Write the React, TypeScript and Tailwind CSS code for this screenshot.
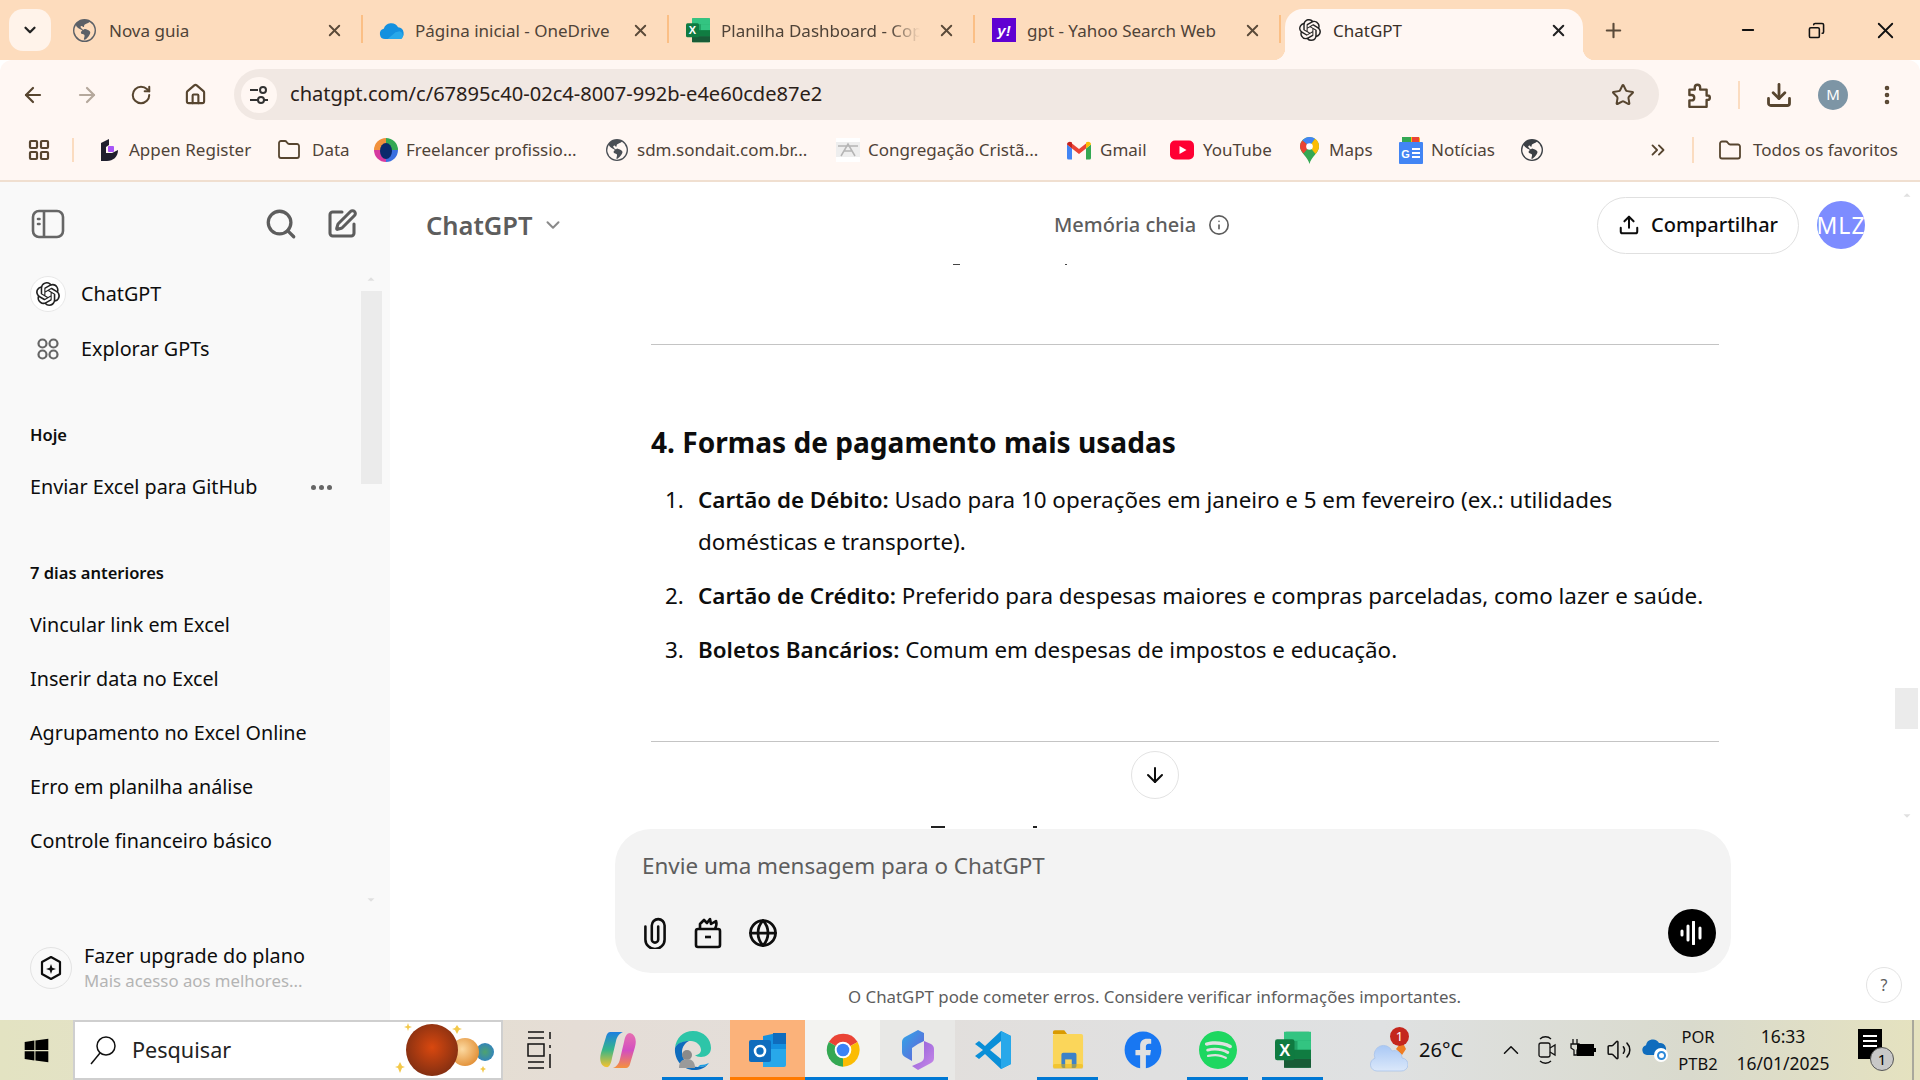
import React from "react";
import {
  ArrowLeft, ArrowRight, RotateCw, Home, Star, Download, MoreVertical, X, Plus, Minus, Search,
  SquarePen, Globe, ArrowDown, Upload, Info, ChevronDown, ChevronUp, Folder, Volume2, ChevronsRight, Copy, LayoutGrid,
} from "lucide-react";
import { SiOpenai, SiSpotify } from "react-icons/si";
import { BsGlobeAmericas } from "react-icons/bs";
import { FaWindows, FaFacebook } from "react-icons/fa";

const Gpt = ({ s = 24 }: { s?: number }) => <SiOpenai size={s} className="text-[#222]" />;

const OneDrive = ({ s = 26 }: { s?: number }) => (
  <svg width={s} height={s * 0.8} viewBox="0 0 30 24">
    <path d="M7 22a6 6 0 0 1-1.500-11.800A9 9 0 0 1 22 8.500 7 7 0 0 1 24 22z" fill="#1490df" />
    <path d="M10 22l9-8 5-1a5.500 5.500 0 0 1 2 9z" fill="#28a8ea" />
  </svg>
);

const ExcelIcon = ({ s = 24 }: { s?: number }) => (
  <svg width={s} height={s * 1.1} viewBox="0 0 24 26">
    <rect x="6" y="1" width="18" height="24" rx="1.500" fill="#21a366" />
    <rect x="6" y="1" width="18" height="6" fill="#33c481" />
    <rect x="15" y="7" width="9" height="6" fill="#33c481" />
    <rect x="6" y="13" width="18" height="6" fill="#107c41" />
    <rect x="6" y="19" width="18" height="6" fill="#185c37" />
    <rect x="0" y="6" width="13" height="14" rx="1.500" fill="#0f7b41" />
    <text x="6.500" y="17" fontSize="11" fontWeight="700" fill="#fff" textAnchor="middle" fontFamily="Liberation Sans">X</text>
  </svg>
);

const Chrome = ({ s = 38 }: { s?: number }) => (
  <svg width={s} height={s} viewBox="0 0 48 48">
    <path d="M24 24 6 14A21 21 0 0 1 42.500 14z" fill="#ea4335" />
    <path d="M24 24 42.500 14A21 21 0 0 1 24 45z" fill="#fbbc04" />
    <path d="M24 24 24 45A21 21 0 0 1 6 14z" fill="#34a853" />
    <circle cx="24" cy="24" r="10.500" fill="#fff" />
    <circle cx="24" cy="24" r="8" fill="#3b82f6" />
  </svg>
);

const Bar = ({ c = "bg-[#0078d4]", l = "left-0", w = "w-full" }: { c?: string; l?: string; w?: string }) => (
  <div className={`absolute bottom-0 h-[3px] ${c} ${l} ${w}`} />
);

function Tab({ icon, label, fade }: { icon: React.ReactNode; label: string; fade?: boolean }) {
  return (
    <div className="relative flex h-[42px] w-[306px] shrink-0 items-center pl-[16px]">
      <div className="flex h-[26px] w-[26px] shrink-0 items-center justify-center">{icon}</div>
      <span className={`ml-[10px] mr-[17px] flex-1 overflow-hidden whitespace-nowrap pt-[2px] text-[17px] text-[#4f4338] ${fade ? "[mask-image:linear-gradient(to_right,black_85%,transparent)]" : ""}`}>{label}</span>
      <X size={19} strokeWidth={2.4} className="mr-[19px] shrink-0 text-[#5a4a39]" />
      <div className="absolute right-0 top-[6px] h-[28px] w-[2px] bg-[#fbbf85]" />
    </div>
  );
}

function Bookmark({ w, icon, label, gap = "gap-[8px]" }: { w: string; icon: React.ReactNode; label?: string; gap?: string }) {
  return (
    <div className={`flex shrink-0 items-center ${gap} ${w}`}>
      <div className="flex h-[24px] w-[24px] shrink-0 items-center justify-center">{icon}</div>
      {label && <span className="whitespace-nowrap text-[17px] text-[#4f4338]">{label}</span>}
    </div>
  );
}

const FreelancerIcon = () => (
  <svg width="24" height="24" viewBox="0 0 24 24">
    <path d="M12 0a12 12 0 0 1 12 12H12z" fill="#34a853" />
    <path d="M24 12a12 12 0 0 1-12 12V12z" fill="#3b6fe0" />
    <path d="M12 24A12 12 0 0 1 0 12h12z" fill="#d63aa0" />
    <path d="M0 12A12 12 0 0 1 12 0v12z" fill="#f2913c" />
    <ellipse cx="12" cy="13" rx="6" ry="8" fill="#0b2a6b" />
  </svg>
);

const GmailIcon = () => (
  <svg width="24" height="19" viewBox="0 0 24 18">
    <path d="M0 3v13.500A1.500 1.500 0 0 0 1.500 18H5V7z" fill="#4285f4" />
    <path d="M24 3v13.500a1.500 1.500 0 0 1-1.500 1.500H19V7z" fill="#34a853" />
    <path d="M5 7v-5L12 7.500 19 2v5l-7 5.500z" fill="#ea4335" />
    <path d="M0 3c0-2.500 3-3.500 5-2v6z" fill="#c5221f" />
    <path d="M24 3c0-2.500-3-3.500-5-2v6z" fill="#fbbc04" />
  </svg>
);

const MapsIcon = () => (
  <svg width="19" height="27" viewBox="0 0 19 27">
    <path d="M9.500 27C8 20 0 16 0 9.500a9.500 9.500 0 0 1 19 0C19 16 11 20 9.500 27z" fill="#34a853" />
    <path d="M2.500 3.500A9.500 9.500 0 0 1 9.500 0c2 0 4 .7 5.500 1.800L9.500 9.500z" fill="#4285f4" />
    <path d="M0 9.500c0-2.300.9-4.500 2.500-6l7 6-6 7C1.500 14 0 12 0 9.500z" fill="#ea4335" />
    <path d="M15 1.800A9.500 9.500 0 0 1 19 9.500c0 2.500-1.500 5-3.500 7.500l-6-7.500z" fill="#fbbc04" />
    <circle cx="9.500" cy="9.500" r="3.300" fill="#fff" />
  </svg>
);

const NewsIcon = () => (
  <svg width="24" height="27" viewBox="0 0 24 27">
    <rect x="3" y="0" width="18" height="8" rx="1.500" fill="#fbbc04" />
    <rect x="3" y="0" width="9" height="5" fill="#34a853" />
    <rect x="13" y="0" width="7" height="5" fill="#ea4335" />
    <rect x="0" y="5" width="24" height="22" rx="1" fill="#4285f4" />
    <text x="6.500" y="21" fontSize="11" fontWeight="700" fill="#fff" textAnchor="middle" fontFamily="Liberation Sans">G</text>
    <path d="M13 12h8M13 16h8M13 20h8" stroke="#fff" strokeWidth="2" />
  </svg>
);

const CopilotIcon = () => (
  <svg width="36" height="40" viewBox="0 0 36 38">
    <defs>
      <linearGradient id="cp1" x1="0" y1="0" x2="0" y2="1"><stop offset="0" stopColor="#1d7fe0" /><stop offset=".5" stopColor="#35b58a" /><stop offset="1" stopColor="#f6c22e" /></linearGradient>
      <linearGradient id="cp2" x1="0" y1="0" x2="0" y2="1"><stop offset="0" stopColor="#e66fb0" /><stop offset=".5" stopColor="#d34ec0" /><stop offset="1" stopColor="#f5913c" /></linearGradient>
    </defs>
    <path d="M10 1h13c-3 1-6 4-7 9l-4 17c-1 6-3 10-6 9-5-1-7-7-5-14L6 6c.4-2 2-5 4-5z" fill="url(#cp1)" />
    <path d="M26 37H13c3-1 6-4 7-9l4-17c1-6 3-9 6-9 5 1 7 7 5 14l-5 17c-.4 2-2 4-4 4z" fill="url(#cp2)" />
  </svg>
);

const EdgeIcon = () => (
  <svg width="38" height="40" viewBox="0 0 38 40">
    <path d="M1 18C2 8 9 1 19 1c11 0 18 8 18 17 0 6-5 9-10 9-3 0-5-1-6-2 3 0 6-2 6-5 0-5-5-9-10-9C10 11 3 13 1 18z" fill="#2dc5a8" />
    <path d="M1 18c2-5 8-7 14-7 -4 2-7 6-7 11 0 8 7 15 16 15 5 0 8-1 10-3-3 4-8 6-14 6C9 40 0 30 1 18z" fill="#0f6cbd" />
    <circle cx="13" cy="25" r="5" fill="#8a8a8a" />
    <path d="M5 38c0-6 3-9 8-9s8 3 8 9z" fill="#9a9a9a" />
    <path d="M24 37c5 0 9-1 11-4-3 1-5 2-9 2z" fill="#1b9de2" />
  </svg>
);

const OutlookIcon = () => (
  <svg width="38" height="38" viewBox="0 0 38 38">
    <path d="M14 5l14-3 9 7v22H14z" fill="#1490df" />
    <rect x="24" y="2" width="13" height="11" fill="#0f6cbd" />
    <path d="M14 18h23v16a2 2 0 0 1-2 2H14z" fill="#28a8ea" />
    <rect x="0" y="9" width="22" height="22" rx="2" fill="#0f6cbd" />
    <circle cx="11" cy="20" r="5" fill="none" stroke="#fff" strokeWidth="2.600" />
  </svg>
);

const M365Icon = () => (
  <svg width="34" height="40" viewBox="0 0 34 40">
    <defs>
      <linearGradient id="m1" x1="0" y1="0" x2="1" y2="1"><stop offset="0" stopColor="#2fa8e8" /><stop offset="1" stopColor="#6a5fd8" /></linearGradient>
      <linearGradient id="m2" x1="0" y1="0" x2="1" y2="1"><stop offset="0" stopColor="#8d5bd8" /><stop offset="1" stopColor="#c98ae8" /></linearGradient>
    </defs>
    <path d="M17 0l6 3v8l-6 3-6 4v13l-7-4c-2-1-3-3-3-5V12c0-2 1-4 3-5z" fill="url(#m1)" />
    <path d="M23 11l7 3c2 1 3 3 3 5v9c0 2-1 4-3 5l-13 7-6-4 9-4c2-1 3-3 3-5z" fill="url(#m2)" />
  </svg>
);

const VsCode = () => (
  <svg width="36" height="40" viewBox="0 0 36 38">
    <path d="M26 0l10 5v28l-10 5L10 23l-6 5-4-3 8-6-8-6 4-3 6 5z" fill="#0a8fd8" />
    <path d="M26 0v38l10-5V5z" fill="#28a8ea" />
    <path d="M26 10L15 19l11 9z" fill="#e5e3df" />
  </svg>
);

const ExplorerIcon = () => (
  <svg width="32" height="44" viewBox="0 0 34 46">
    <path d="M1 4a2 2 0 0 1 2-2h10l3 4H1z" fill="#d99a00" />
    <rect x="1" y="6" width="32" height="36" rx="2" fill="#fbd65a" />
    <rect x="10" y="26" width="16" height="16" rx="2" fill="#3c82c8" />
    <rect x="14" y="33" width="7" height="9" fill="#fbd65a" />
    <rect x="1" y="38" width="32" height="5" rx="2" fill="#eab308" opacity="0.5" />
  </svg>
);

const Planets = () => (
  <svg width="100" height="56" viewBox="0 0 100 56">
    <defs>
      <radialGradient id="p1" cx="50%" cy="45%" r="60%"><stop offset="0" stopColor="#d9480f" /><stop offset="1" stopColor="#7c2d12" /></radialGradient>
      <radialGradient id="p2" cx="40%" cy="40%" r="70%"><stop offset="0" stopColor="#fcd9a0" /><stop offset="1" stopColor="#e08a2e" /></radialGradient>
      <radialGradient id="p3" cx="50%" cy="50%" r="60%"><stop offset="0" stopColor="#4ea36e" /><stop offset="1" stopColor="#2f7fc8" /></radialGradient>
    </defs>
    <circle cx="90" cy="30" r="9" fill="url(#p3)" />
    <circle cx="70" cy="30" r="14" fill="url(#p2)" />
    <ellipse cx="37" cy="28" rx="26" ry="26" fill="url(#p1)" />
    <path d="M5 40l2 4 3 1-3 1-2 5-2-5-3-1 3-1zM62 3l2 3 3 1-3 1-2 4-2-4-3-1 3-1zM13 1l1 3 3 1-3 1-1 3-1-3-3-1 3-1zM88 44l1 2 2 1-2 1-1 3-1-3-2-1 2-1z" fill="#f4c94a" />
  </svg>
);

const WeatherIcon = () => (
  <div className="relative h-[46px] w-[38px]">
    <svg width="38" height="36" viewBox="0 0 38 36" className="absolute bottom-0 left-0">
      <defs><linearGradient id="cl" x1="0" y1="0" x2="0" y2="1"><stop offset="0" stopColor="#a9c8f5" /><stop offset="1" stopColor="#dbe8fa" /></linearGradient></defs>
      <path d="M26 12l6-8 4 8-4 6z" fill="#ef7d22" />
      <path d="M7 34a6.500 6.500 0 0 1-2-12.700A9 9 0 0 1 22 14a7.500 7.500 0 0 1 10 7 6.500 6.500 0 0 1-1 13z" fill="url(#cl)" stroke="#a8c3ea" strokeWidth="0.800" />
    </svg>
    <div className="absolute right-[-1px] top-0 flex h-[19px] w-[19px] items-center justify-center rounded-full bg-[#c4261d] text-[13px] leading-none text-white">1</div>
  </div>
);

const Battery = () => (
  <svg width="26" height="24" viewBox="0 0 26 24">
    <path d="M3 1v5M7 1v5M1 6h8v4l-2 2v5H4v-5L1 10z" fill="none" stroke="#111" strokeWidth="1.300" />
    <rect x="7" y="6" width="17" height="12" fill="#000" />
    <rect x="24" y="10" width="2" height="4" fill="#000" />
  </svg>
);

const CameraTray = () => (
  <svg width="18" height="30" viewBox="0 0 18 30" fill="none" stroke="#111" strokeWidth="1.300">
    <path d="M2 4c3-3 8-3 11 0M2 26c3 3 8 3 11 0" />
    <rect x="1" y="8" width="11" height="14" rx="2" />
    <path d="M12 13l5-3v10l-5-3" />
  </svg>
);

const TrayCloud = () => (
  <div className="relative h-[24px] w-[26px]">
    <svg width="24" height="18" viewBox="0 0 24 18"><path d="M5 17a5 5 0 0 1-1-9.800A7 7 0 0 1 17 5a5.500 5.500 0 0 1 2 12z" fill="#0f6cbd" /></svg>
    <div className="absolute bottom-0 right-0 flex h-[14px] w-[14px] items-center justify-center rounded-full bg-white">
      <div className="h-[9px] w-[9px] rounded-full border-[2px] border-[#2b88d8]" />
    </div>
  </div>
);

const ToolIcon = ({ children }: { children: React.ReactNode }) => (
  <div className="flex h-[48px] w-[54px] shrink-0 items-center justify-center text-[#57452f]">{children}</div>
);

const SideRow = ({ label, extra }: { label: string; extra?: React.ReactNode }) => (
  <div className="flex h-[54px] items-center justify-between pl-[30px] pr-[58px] text-[#0d0d0d]">
    <span className="whitespace-nowrap text-[19.750px]">{label}</span>
    {extra}
  </div>
);

const PanelIcon = () => (
  <svg width="34" height="30" viewBox="0 0 34 30" fill="none" stroke="#666" strokeWidth="2.600">
    <rect x="2" y="2" width="30" height="26" rx="6" />
    <path d="M13 2v26" />
    <path d="M7 10h1.500M7 15h1.500" strokeLinecap="round" />
  </svg>
);

const CaixaIcon = () => (
  <svg width="28" height="32" viewBox="0 0 28 32" fill="none" stroke="#0d0d0d" strokeWidth="2.600" strokeLinejoin="round">
    <rect x="2" y="12" width="24" height="18" rx="2" />
    <path d="M11 20h6" />
    <path d="M6 12V7l4-4 3 3 3-4 1 5 5-3c1 3 0 6-1 8" />
  </svg>
);

const ClipIcon = () => (
  <svg width="26" height="32" viewBox="0 0 24 30" fill="none" stroke="#0d0d0d" strokeWidth="2.400" strokeLinecap="round">
    <path d="M3 9v12a9 9 0 0 0 18 0V8a6 6 0 0 0-12 0v13a3 3 0 0 0 6 0V9" />
  </svg>
);

const PuzzleIcon = () => (
  <svg width="28" height="28" viewBox="0 0 24 26" fill="none" stroke="#57452f" strokeWidth="2.200" strokeLinejoin="round">
    <path d="M4 8h5V6a2.500 2.500 0 0 1 5 0v2h6v5.500h1a2 2 0 0 1 0 4h-1V24H4v-6h2a2.500 2.500 0 0 0 0-5H4z" />
  </svg>
);

const AppCell = ({ children, bar, bg }: { children: React.ReactNode; bar?: React.ReactNode; bg?: string }) => (
  <div className={`relative flex h-full w-[75px] shrink-0 items-center justify-center ${bg || ""}`}>
    {children}
    {bar}
  </div>
);

export default function App() {
  return (
    <div className="flex h-[1080px] w-[1920px] flex-col overflow-hidden bg-white font-['Noto_Sans',sans-serif]">
      {/* Tab strip */}
      <div className="flex h-[60px] shrink-0 bg-[#fddcbd] pl-[9px] pt-[9px]">
        <div className="flex h-[42px] w-[42px] shrink-0 items-center justify-center rounded-[14px] bg-[#fff3ea] text-[#222]">
          <ChevronDown size={18} strokeWidth={3} />
        </div>
        <div className="ml-[6px] flex">
          <Tab icon={<BsGlobeAmericas size={23} className="-translate-x-[2px] text-[#5b6067]" />} label="Nova guia" />
          <Tab icon={<OneDrive />} label="Página inicial - OneDrive" />
          <Tab icon={<ExcelIcon />} label="Planilha Dashboard - Copia" fade />
          <Tab
            icon={<div className="flex h-[24px] w-[24px] items-center justify-center bg-[#6001d2] font-['Liberation_Sans',sans-serif] text-[15px] font-bold italic leading-none text-white">y!</div>}
            label="gpt - Yahoo Search Web"
          />
        </div>
        <div className="relative ml-[4px] flex h-[51px] w-[298px] shrink-0 items-center rounded-t-[18px] bg-[#fff7f3] pb-[9px] pl-[14px]">
          <div className="absolute bottom-0 left-[-12px] h-[12px] w-[12px] bg-[radial-gradient(circle_at_0_0,transparent_12px,#fff7f3_12.500px)]" />
          <div className="absolute bottom-0 right-[-12px] h-[12px] w-[12px] bg-[radial-gradient(circle_at_100%_0,transparent_12px,#fff7f3_12.500px)]" />
          <Gpt s={22} />
          <span className="ml-[12px] flex-1 pt-[2px] text-[17px] text-[#3a3028]">ChatGPT</span>
          <X size={19} strokeWidth={2.6} className="mr-[15px] text-[#222]" />
        </div>
        <div className="ml-[18px] flex h-[42px] w-[24px] items-center justify-center text-[#5a4a39]">
          <Plus size={23} strokeWidth={2.2} />
        </div>
        <div className="ml-auto flex h-[42px] items-center text-[#111]">
          <div className="flex w-[68px] justify-center"><Minus size={18} strokeWidth={2.4} /></div>
          <div className="flex w-[68px] justify-center"><Copy size={17} strokeWidth={2.2} className="-scale-x-100" /></div>
          <div className="flex w-[70px] justify-center"><X size={27} strokeWidth={1.600} /></div>
        </div>
      </div>

      {/* Toolbar */}
      <div className="flex h-[62px] shrink-0 items-center rounded-t-[12px] bg-[#fff7f3] pl-[6px] pt-[7px]">
        <ToolIcon><ArrowLeft size={24} strokeWidth={2.2} /></ToolIcon>
        <ToolIcon><ArrowRight size={24} strokeWidth={2.2} className="text-[#b5a89c]" /></ToolIcon>
        <ToolIcon><RotateCw size={22} strokeWidth={2.2} /></ToolIcon>
        <ToolIcon><Home size={23} strokeWidth={2.2} /></ToolIcon>
        <div className="ml-[12px] flex h-[51px] w-[1425px] shrink-0 items-center rounded-full bg-[#f1e8e3] pl-[7px] pr-[24px]">
          <div className="flex h-[36px] w-[36px] items-center justify-center rounded-full bg-[#fff7f3]">
            <svg width="22" height="22" viewBox="0 0 22 22" fill="none" stroke="#333" strokeWidth="2">
              <path d="M2 6h8M2 16h8M16 16h4" /><circle cx="15" cy="6" r="3" /><circle cx="13" cy="16" r="3" />
            </svg>
          </div>
          <span className="ml-[13px] flex-1 whitespace-nowrap text-[20.100px] text-[#2a2018]">chatgpt.com/c/67895c40-02c4-8007-992b-e4e60cde87e2</span>
          <Star size={24} strokeWidth={2} className="text-[#57452f]" />
        </div>
        <div className="ml-[12px]"><ToolIcon><PuzzleIcon /></ToolIcon></div>
        <div className="ml-[13px] h-[28px] w-[2px] bg-[#fbdcc0]" />
        <div className="ml-[12px]"><ToolIcon><Download size={28} strokeWidth={2.4} /></ToolIcon></div>
        <ToolIcon>
          <div className="flex h-[30px] w-[30px] items-center justify-center rounded-full bg-[#7d95a5] text-[15px] text-white">M</div>
        </ToolIcon>
        <ToolIcon><MoreVertical size={24} strokeWidth={2.6} /></ToolIcon>
      </div>

      {/* Bookmarks */}
      <div className="flex h-[60px] shrink-0 items-center border-b-[2px] border-[#f0dfd0] bg-[#fff7f3] pb-[2px] pl-[27px]">
        <LayoutGrid size={24} strokeWidth={2.2} className="shrink-0 text-[#57452f]" />
        <div className="ml-[21px] mr-[23px] h-[24px] w-[2px] shrink-0 bg-[#fbdcc0]" />
        <Bookmark w="w-[180px]" label="Appen Register" icon={
          <svg width="20" height="24" viewBox="0 0 20 24"><path d="M2 5l8-4v6L7 9v6h6l6-3c0 7-5 11-11 11H2z" fill="#1f1f2e" /><rect x="9" y="8" width="6" height="6" rx="1" fill="#a855f7" /></svg>
        } />
        <Bookmark w="w-[97px]" gap="gap-[11px]" label="Data" icon={<Folder size={24} strokeWidth={1.800} className="text-[#57452f]" />} />
        <Bookmark w="w-[231px]" label="Freelancer profissio..." icon={<FreelancerIcon />} />
        <Bookmark w="w-[231px]" label="sdm.sondait.com.br..." icon={<BsGlobeAmericas size={22} className="text-[#4a4f55]" />} />
        <Bookmark w="w-[231px]" label="Congregação Cristã..." icon={
          <svg width="24" height="24" viewBox="0 0 24 24"><rect width="24" height="24" fill="#fff" /><rect y="4" width="24" height="15" fill="#eee" /><path d="M2 8h20M5 18L12 6l7 12M8 13h8" stroke="#b5b5b5" strokeWidth="1.500" fill="none" /></svg>
        } />
        <Bookmark w="w-[103px]" gap="gap-[9px]" label="Gmail" icon={<GmailIcon />} />
        <Bookmark w="w-[127px]" gap="gap-[9px]" label="YouTube" icon={
          <svg width="24" height="20" viewBox="0 0 24 20"><rect width="24" height="19" y="0.500" rx="5" fill="#ff0033" /><path d="M9.500 6v8l7-4z" fill="#fff" /></svg>
        } />
        <Bookmark w="w-[102px]" label="Maps" icon={<MapsIcon />} />
        <Bookmark w="w-[121px]" label="Notícias" icon={<NewsIcon />} />
        <Bookmark w="w-[127px]" icon={<BsGlobeAmericas size={22} className="text-[#3c4045]" />} />
        <ChevronsRight size={22} strokeWidth={2} className="shrink-0 text-[#57452f]" />
        <div className="ml-[23px] mr-[24px] h-[26px] w-[2px] shrink-0 bg-[#fbdcc0]" />
        <Bookmark w="w-[180px]" gap="gap-[11px]" label="Todos os favoritos" icon={<Folder size={25} strokeWidth={1.800} className="text-[#57452f]" />} />
      </div>

      {/* App body */}
      <div className="flex min-h-0 flex-1">
        {/* Sidebar */}
        <aside className="relative flex w-[390px] shrink-0 flex-col bg-[#f9f9f9]">
          <div className="flex h-[84px] items-center justify-between pl-[31px] pr-[32px]">
            <PanelIcon />
            <div className="flex items-center gap-[28px] text-[#5d5d5d]">
              <Search size={34} strokeWidth={2.300} />
              <SquarePen size={32} strokeWidth={2.300} />
            </div>
          </div>
          <div className="mt-[1px] flex h-[54px] items-center pl-[30px]">
            <div className="flex h-[36px] w-[36px] items-center justify-center rounded-full border border-[#e8e8e8] bg-white"><Gpt s={24} /></div>
            <span className="ml-[15px] text-[19.750px] text-[#0d0d0d]">ChatGPT</span>
          </div>
          <div className="mt-[1px] flex h-[54px] items-center pl-[37px]">
            <svg width="22" height="22" viewBox="0 0 22 22" fill="none" stroke="#666" strokeWidth="2.200">
              <circle cx="5.500" cy="5.500" r="4" /><circle cx="16.500" cy="5.500" r="4" /><circle cx="5.500" cy="16.500" r="4" /><circle cx="16.500" cy="16.500" r="4" />
            </svg>
            <span className="ml-[22px] text-[19.750px] text-[#0d0d0d]">Explorar GPTs</span>
          </div>
          <div className="mt-[47px] h-[24px] pl-[30px] text-[16.500px] font-semibold leading-[24px] text-[#0d0d0d]">Hoje</div>
          <div className="mt-[13px]">
            <SideRow label="Enviar Excel para GitHub" extra={
              <div className="flex gap-[3px]"><i className="h-[5px] w-[5px] rounded-full bg-[#666]" /><i className="h-[5px] w-[5px] rounded-full bg-[#666]" /><i className="h-[5px] w-[5px] rounded-full bg-[#666]" /></div>
            } />
          </div>
          <div className="mt-[47px] h-[24px] pl-[30px] text-[16.500px] font-semibold leading-[24px] text-[#0d0d0d]">7 dias anteriores</div>
          <div className="mt-[13px]">
            <SideRow label="Vincular link em Excel" />
            <SideRow label="Inserir data no Excel" />
            <SideRow label="Agrupamento no Excel Online" />
            <SideRow label="Erro em planilha análise" />
            <SideRow label="Controle financeiro básico" />
          </div>
          <div className="mt-auto flex items-center pb-[27px] pl-[30px]">
            <div className="flex h-[42px] w-[42px] shrink-0 items-center justify-center rounded-full border border-[#e3e3e3]">
              <svg width="24" height="26" viewBox="0 0 24 26" fill="none" stroke="#0d0d0d" strokeWidth="2.200">
                <path d="M12 2l9 5v12l-9 5-9-5V7z" strokeLinejoin="round" />
                <path d="M12 9l1.300 3.700L17 14l-3.700 1.300L12 19l-1.300-3.700L7 14l3.700-1.300z" fill="#0d0d0d" stroke="none" />
              </svg>
            </div>
            <div className="ml-[12px] flex flex-col">
              <span className="text-[19.800px] leading-[26px] text-[#0d0d0d]">Fazer upgrade do plano</span>
              <span className="text-[16.800px] leading-[24px] text-[#b4b4b4]">Mais acesso aos melhores...</span>
            </div>
          </div>
          {/* sidebar scrollbar */}
          <ChevronUp size={14} strokeWidth={0} fill="#e0e0e0" className="absolute left-[364px] top-[90px]" />
          <div className="absolute left-[361px] top-[109px] h-[193px] w-[21px] bg-[#ebebeb]" />
          <ChevronDown size={14} strokeWidth={0} fill="#e0e0e0" className="absolute left-[364px] top-[711px]" />
        </aside>

        {/* Main */}
        <main className="relative flex min-w-0 flex-1 flex-col">
          <header className="flex h-[86px] shrink-0 items-center pl-[36px]">
            <div className="flex w-[628px] items-center">
              <span className="text-[25.500px] font-semibold text-[#5d5d5d]">ChatGPT</span>
              <ChevronDown size={22} strokeWidth={2.200} className="ml-[9px] text-[#8a8a8a]" />
            </div>
            <span className="whitespace-nowrap text-[20px] font-medium text-[#5d5d5d]">Memória cheia</span>
            <Info size={22} strokeWidth={1.800} className="ml-[12px] text-[#5d5d5d]" />
            <div className="ml-auto flex items-center pr-[55px]">
              <div className="flex h-[57px] w-[202px] items-center justify-center gap-[11px] rounded-full border border-[#e0e0e0] bg-white text-[#0d0d0d]">
                <Upload size={22} strokeWidth={2.200} />
                <span className="text-[20px] font-medium">Compartilhar</span>
              </div>
              <div className="ml-[18px] flex h-[48px] w-[48px] items-center justify-center overflow-hidden rounded-full bg-[#7d8cff] text-[23px] tracking-[1px] text-white">MLZ</div>
            </div>
          </header>

          <div className="flex flex-col pl-[261px]">
            <div className="relative mt-[-4px] h-[1px] w-[1068px]">
              <div className="absolute left-[302px] top-0 h-[1px] w-[7px] bg-[#444]" />
              <div className="absolute left-[414px] top-0 h-[1px] w-[2px] bg-[#444]" />
            </div>
            <hr className="mt-[79px] w-[1068px] border-t border-[#c4c4c4]" />
            <h3 className="mt-[77px] text-[28.100px] font-bold leading-[40px] text-[#0d0d0d]">4. Formas de pagamento mais usadas</h3>
            <ol className="mt-[17px] flex w-[1068px] flex-col gap-[12px] text-[22.400px] leading-[42px] text-[#0d0d0d]">
              <li className="flex">
                <span className="w-[47px] shrink-0 pl-[14px]">1.</span>
                <span>
                  <b className="font-semibold">Cartão de Débito:</b> Usado para 10 operações em janeiro e 5 em fevereiro (ex.: utilidades domésticas e transporte).
                </span>
              </li>
              <li className="flex">
                <span className="w-[47px] shrink-0 pl-[14px]">2.</span>
                <span className="whitespace-nowrap">
                  <b className="font-semibold">Cartão de Crédito:</b> Preferido para despesas maiores e compras parceladas, como lazer e saúde.
                </span>
              </li>
              <li className="flex">
                <span className="w-[47px] shrink-0 pl-[14px]">3.</span>
                <span>
                  <b className="font-semibold">Boletos Bancários:</b> Comum em despesas de impostos e educação.
                </span>
              </li>
            </ol>
            <hr className="mt-[70px] w-[1068px] border-t border-[#c4c4c4]" />
          </div>

          <div className="ml-[741px] mt-[9px] flex h-[48px] w-[48px] items-center justify-center rounded-full border border-[#e3e3e3] bg-white text-[#0d0d0d]">
            <ArrowDown size={24} strokeWidth={2} />
          </div>

          <div className="relative mt-[29px] h-[1px]">
            <div className="absolute left-[541px] top-[-2px] h-[2px] w-[14px] bg-[#222]" />
            <div className="absolute left-[643px] top-[-2px] h-[2px] w-[4px] bg-[#222]" />
          </div>

          <div className="ml-[225px] flex h-[144px] w-[1116px] shrink-0 flex-col rounded-[36px] bg-[#f3f3f3] pl-[27px] pr-[15px]">
            <div className="mt-[22px] h-[30px] text-[22.400px] leading-[30px] text-[#5d5d5d]">Envie uma mensagem para o ChatGPT</div>
            <div className="mt-[28px] flex items-center justify-between">
              <div className="flex items-center gap-[26px] text-[#0d0d0d]">
                <ClipIcon />
                <CaixaIcon />
                <Globe size={30} strokeWidth={2.200} />
              </div>
              <div className="flex h-[48px] w-[48px] items-center justify-center rounded-full bg-black">
                <svg width="26" height="24" viewBox="0 0 26 24" stroke="#fff" strokeWidth="3" strokeLinecap="round">
                  <path d="M3 10v4M9 5v14M14.500 1v22M21 7v10" />
                </svg>
              </div>
            </div>
          </div>

          <div className="mt-[12px] flex h-[24px] items-center justify-center pr-[1px] text-[16.850px] text-[#5d5d5d]">O ChatGPT pode cometer erros. Considere verificar informações importantes.</div>

          {/* overlays */}
          <div className="absolute left-[1476px] top-[785px] flex h-[36px] w-[36px] items-center justify-center rounded-full border border-[#e3e3e3] bg-white text-[16px] text-[#5d5d5d]">?</div>
          <ChevronUp size={14} strokeWidth={0} fill="#e0e0e0" className="absolute left-[1510px] top-[6px]" />
          <div className="absolute left-[1505px] top-[506px] h-[41px] w-[23px] bg-[#ebebeb]" />
          <ChevronDown size={14} strokeWidth={0} fill="#e0e0e0" className="absolute left-[1510px] top-[627px]" />
        </main>
      </div>

      {/* Taskbar */}
      <div className="flex h-[60px] shrink-0 items-center bg-[linear-gradient(to_right,#e3e3c2_0%,#e5ddd6_30%,#e0e0e0_60%,#dfe1e2_72%,#d9dacd_88%,#e5e2bf_100%)] text-[#111]">
        <div className="flex w-[73px] shrink-0 justify-center"><FaWindows size={27} className="text-black" /></div>
        <div className="flex h-[60px] w-[430px] shrink-0 items-center border-[2px] border-[#cfcfcf] bg-white pl-[14px]">
          <svg width="28" height="30" viewBox="0 0 28 30" fill="none" stroke="#111" strokeWidth="1.500" className="shrink-0">
            <circle cx="17" cy="11" r="9" /><path d="M11 18L2 29" />
          </svg>
          <span className="ml-[15px] flex-1 text-[21.600px] text-[#222]">Pesquisar</span>
          <div className="mr-[6px]"><Planets /></div>
        </div>
        <div className="ml-[2px] flex h-full">
          <AppCell>
            <svg width="26" height="40" viewBox="0 0 26 40" fill="none" stroke="#111" strokeWidth="1.500" className="-translate-x-[3px]">
              <path d="M1 2h16M1 8h16M1 14h16v12H1zM1 32h16M1 38h16M23 2v7M23 15v3M23 24v14" />
            </svg>
          </AppCell>
          <AppCell><CopilotIcon /></AppCell>
          <AppCell bar={<Bar l="left-[7px]" w="w-[61px]" />}><EdgeIcon /></AppCell>
          <AppCell bg="bg-[#fbb27a]" bar={<Bar c="bg-[#ff7a00]" />}><OutlookIcon /></AppCell>
          <AppCell bg="bg-[#f3f3f1]" bar={<Bar />}><Chrome /></AppCell>
          <AppCell bg="bg-[#e8e8e6]" bar={<Bar w="w-[68px]" />}><M365Icon /></AppCell>
          <AppCell><VsCode /></AppCell>
          <AppCell bar={<Bar l="left-[7px]" w="w-[61px]" />}><ExplorerIcon /></AppCell>
          <AppCell><FaFacebook size={38} className="text-[#1877f2]" /></AppCell>
          <AppCell bar={<Bar l="left-[7px]" w="w-[61px]" />}><SiSpotify size={38} className="text-[#1ed760]" /></AppCell>
          <AppCell bar={<Bar l="left-[7px]" w="w-[61px]" />}><ExcelIcon s={36} /></AppCell>
        </div>
        <div className="ml-[40px] shrink-0"><WeatherIcon /></div>
        <span className="ml-[11px] w-[61px] shrink-0 text-[20px]">26°C</span>
        <div className="ml-[13px] flex shrink-0 items-center">
          <div className="flex w-[36px] justify-center"><ChevronUp size={26} strokeWidth={1.400} /></div>
          <div className="flex w-[36px] justify-center"><CameraTray /></div>
          <div className="flex w-[36px] justify-center"><Battery /></div>
          <div className="flex w-[36px] justify-center"><Volume2 size={26} strokeWidth={1.400} /></div>
          <div className="flex w-[36px] justify-center"><TrayCloud /></div>
        </div>
        <div className="ml-[-5px] flex w-[60px] shrink-0 flex-col items-center text-[16.500px] leading-[27px]">
          <span>POR</span><span>PTB2</span>
        </div>
        <div className="ml-[0px] flex w-[110px] shrink-0 flex-col items-center text-[17.500px] leading-[27px]">
          <span>16:33</span><span>16/01/2025</span>
        </div>
        <div className="relative ml-[20px] h-[46px] w-[36px] shrink-0">
          <div className="absolute left-0 top-[2px] h-[30px] w-[24px] bg-black">
            <div className="mx-[5px] mt-[6px] h-[2px] bg-white" />
            <div className="mx-[5px] mt-[3px] h-[2px] bg-white" />
            <div className="mx-[5px] mt-[3px] h-[2px] bg-white" />
          </div>
          <div className="absolute left-[12px] top-[20px] flex h-[24px] w-[24px] items-center justify-center rounded-full border border-[#555] bg-[#c8c8c8] text-[15px] leading-none text-black">1</div>
        </div>
        <div className="ml-auto mr-[6px] h-full w-[2px] bg-[#a9a89c]" />
      </div>
    </div>
  );
}
